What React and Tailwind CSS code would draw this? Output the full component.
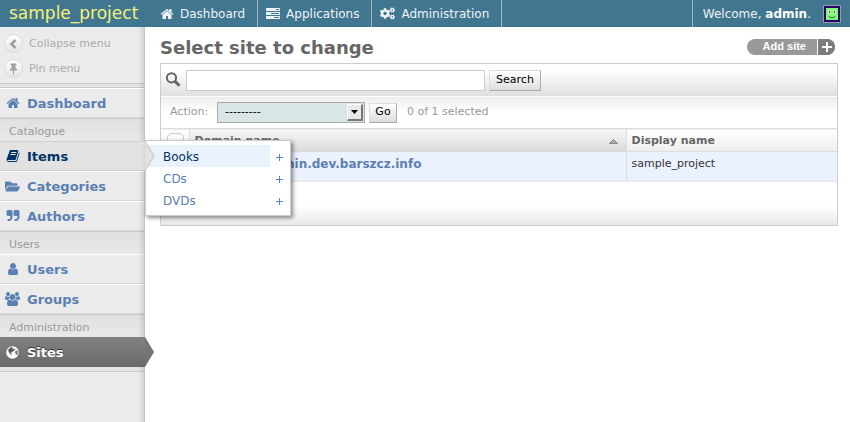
import { FaCogs, FaFolderOpen } from "react-icons/fa";

const PATHS = {
  home: "M1472 992v480q0 26-19 45t-45 19h-384v-384h-256v384h-384q-26 0-45-19t-19-45v-480q0-1 .5-3t.5-3l575-474 575 474q1 2 1 6zm223-69l-62 74q-8 9-21 11h-3q-13 0-21-7l-692-577-692 577q-12 8-24 7-13-2-21-11l-62-74q-8-10-7-23.5t11-21.5l719-599q32-26 76-26t76 26l244 204v-195q0-14 9-23t23-9h192q14 0 23 9t9 23v408l219 182q10 8 11 21.5t-7 23.5z",
  tasks: "M1024 1408h640v-128h-640v128zm-384-512h1024v-128h-1024v128zm640-512h384v-128h-384v128zm512 832v256q0 26-19 45t-45 19h-1664q-26 0-45-19t-19-45v-256q0-26 19-45t45-19h1664q26 0 45 19t19 45zm0-512v256q0 26-19 45t-45 19h-1664q-26 0-45-19t-19-45v-256q0-26 19-45t45-19h1664q26 0 45 19t19 45zm0-512v256q0 26-19 45t-45 19h-1664q-26 0-45-19t-19-45v-256q0-26 19-45t45-19h1664q26 0 45 19t19 45z",
  book: "M1703 478q40 57 18 129l-275 906q-19 64-76.5 107.5t-122.5 43.5h-923q-77 0-148.5-53.5t-99.5-131.5q-24-67-2-127 0-4 3-27t4-37q1-8-3-21.5t-3-19.5q2-11 8-21t16.5-23.5 16.5-23.5q23-38 45-91.5t30-91.5q3-10 .5-30t-.5-28q3-11 17-28t17-23q21-36 42-92t25-90q1-9-2.5-32t.5-28q4-13 22-30.5t22-22.5q19-26 42.5-84.5t27.5-96.5q1-8-3-25.5t-2-26.5q2-8 9-18t18-23 17-21q8-12 16.5-30.5t15-35 16-36 19.5-32 26.5-23.5 36-11.5 47.5 5.5l-1 3q38-9 51-9h761q74 0 114 56t18 130l-274 906q-36 119-71.5 153.5t-128.5 34.5h-869q-27 0-38 15-11 16-1 43 24 70 144 70h923q29 0 56-15.5t35-41.5l300-987q7-22 5-57 38 15 59 43zm-1064 2q-4 13 2 22.5t20 9.5h608q13 0 25.5-9.5t16.5-22.5l21-64q4-13-2-22.5t-20-9.5h-608q-13 0-25.5 9.5t-16.5 22.5zm-83 256q-4 13 2 22.5t20 9.5h608q13 0 25.5-9.5t16.5-22.5l21-64q4-13-2-22.5t-20-9.5h-608q-13 0-25.5 9.5t-16.5 22.5z",
  quote: "M832 320v704q0 104-40.5 198.5t-109.5 163.5-163.5 109.5-198.5 40.5h-64q-26 0-45-19t-19-45v-128q0-26 19-45t45-19h64q106 0 181-75t75-181v-32q0-40-28-68t-68-28h-224q-80 0-136-56t-56-136v-384q0-80 56-136t136-56h384q80 0 136 56t56 136zm896 0v704q0 104-40.5 198.5t-109.5 163.5-163.5 109.5-198.5 40.5h-64q-26 0-45-19t-19-45v-128q0-26 19-45t45-19h64q106 0 181-75t75-181v-32q0-40-28-68t-68-28h-224q-80 0-136-56t-56-136v-384q0-80 56-136t136-56h384q80 0 136 56t56 136z",
  user: "M1536 1399q0 109-62.5 187t-150.5 78h-854q-88 0-150.5-78t-62.5-187q0-85 8.5-160.5t31.5-152 58.5-131 94-89 134.5-34.5q131 128 313 128t313-128q76 0 134.5 34.5t94 89 58.5 131 31.5 152 8.5 160.5zm-256-887q0 159-112.5 271.5t-271.5 112.5-271.5-112.5-112.5-271.5 112.5-271.5 271.5-112.5 271.5 112.5 112.5 271.5z",
  users: "M529 896q-162 5-265 128h-134q-82 0-138-40.5t-56-118.5q0-353 124-353 6 0 43.5 21t97.5 42.5 119 21.5q67 0 133-23-5 37-5 66 0 139 81 256zm1071 637q0 120-73 189.5t-194 69.5h-874q-121 0-194-69.5t-73-189.5q0-53 3.5-103.5t14-109 26.5-108.5 43-97.5 62-81 85.5-53.5 111.5-20q10 0 43 21.5t73 48 107 48 135 21.5 135-21.5 107-48 73-48 43-21.5q61 0 111.5 20t85.5 53.5 62 81 43 97.5 26.5 108.5 14 109 3.5 103.5zm-1024-1277q0 106-75 181t-181 75-181-75-75-181 75-181 181-75 181 75 75 181zm704 384q0 159-112.5 271.5t-271.5 112.5-271.5-112.5-112.5-271.5 112.5-271.5 271.5-112.5 271.5 112.5 112.5 271.5zm576 225q0 78-56 118.5t-138 40.5h-134q-103-123-265-128 81-117 81-256 0-29-5-66 66 23 133 23 59 0 119-21.5t97.5-42.5 43.5-21q124 0 124 353zm-128-609q0 106-75 181t-181 75-181-75-75-181 75-181 181-75 181 75 75 181z",
};

function Glyph({ name, className = "size-[14px]" }) {
  return (
    <svg viewBox={name === "users" ? "-64 0 1920 1792" : "0 0 1792 1792"} className={className} fill="currentColor" aria-hidden="true">
      <path d={PATHS[name]} />
    </svg>
  );
}

function Globe() {
  return (
    <svg viewBox="0 0 13 13" className="size-[13px]" aria-hidden="true">
      <circle cx="6.5" cy="6.5" r="6.2" fill="#fff" />
      <path d="M4.200 1.600L7 1.200 6.200 2.600 8 3.200 8.800 2.500 9.400 3.600 8 4.800 6.800 5.600 6 6.600 4.800 6.600 5 7.800 6.200 8.600 5.400 9 3.600 7.600 2.600 5.600 2 4z" fill="#5c5c5c" />
      <path d="M9.500 5l2.200-.4.2 2.600-1.300 2-1-.6.3-1.400-1.300-.7z" fill="#777" />
    </svg>
  );
}

function TopLink({ icon, children }) {
  return (
    <a href="#" className="flex items-center gap-[6px] border-r border-[#a9b3b7] pr-[12px] pl-[8px] text-[12px] text-[#eef3f5]">
      {icon}
      {children}
    </a>
  );
}

function SectionLabel({ children }) {
  return (
    <h2 className="h-[23px] border-t border-[#c9c9c9] bg-linear-to-b from-[#e0e0e0] to-[#e9e9e9] pl-[9px] text-[11px] leading-[26px] text-[#999]">
      {children}
    </h2>
  );
}

const rowBase = "flex h-[30px] items-center pt-[2px] text-[13px] font-bold";

function RowIcon({ children }) {
  return <span className="flex w-[27px] justify-center pr-[2px] pb-[2px]">{children}</span>;
}

function MenuLink({ icon, children }) {
  return (
    <a href="#" className={`${rowBase} border-t border-b border-t-white border-b-[#dadada] text-[#5b80b2]`}>
      <RowIcon>{icon}</RowIcon>
      {children}
    </a>
  );
}

function ToolButton({ icon, children }) {
  return (
    <button type="button" className="flex h-[25px] w-full items-center gap-[6px] pl-[4px] text-[11px] text-[#aaa]">
      <span className="flex size-[19px] items-center justify-center rounded-full border border-[#dcdcdc] bg-linear-to-b from-white to-[#e4e4e4] text-[#a0a0a0]">
        {icon}
      </span>
      <span className="pt-[2px]">{children}</span>
    </button>
  );
}

function Flyout() {
  const items = ["Books", "CDs", "DVDs"];
  return (
    <ul className="absolute -top-px left-full z-10 w-[146px] border border-[#ccc] bg-white pt-[4px] pb-[4px] text-[12px] shadow-[2px_2px_4px_rgba(0,0,0,0.45)]">
      {items.map((label, i) => (
        <li key={label} className="flex h-[22px] items-center">
          <a
            href="#"
            className={
              i === 0
                ? "h-[22px] w-[124px] bg-[#e9f2fa] pl-[17px] leading-[24px] text-[#003366]"
                : "h-[22px] w-[124px] pl-[17px] leading-[24px] text-[#5b80b2]"
            }
          >
            {label}
          </a>
          <a href="#" aria-label={`Add ${label}`} className="flex w-[18px] justify-center pt-[2px] text-[#5b80b2]">
            <svg viewBox="0 0 7 7" className="size-[7px]" shapeRendering="crispEdges" aria-hidden="true">
              <path d="M3 0h1v3h3v1H4v3H3V4H0V3h3z" fill="currentColor" />
            </svg>
          </a>
        </li>
      ))}
    </ul>
  );
}

function Sidebar() {
  return (
    <nav className="relative w-[145px] shrink-0 bg-[#ebebeb]">
      <div className="pointer-events-none absolute inset-y-0 right-0 w-[7px] border-r border-[#c4c4c4] bg-linear-to-r from-transparent to-black/10" />
      <div className="h-[56px] pt-[4px]">
        <ToolButton
          icon={
            <svg viewBox="0 0 10 10" className="size-[10px]" fill="none" stroke="currentColor" strokeWidth="2.8" aria-hidden="true">
              <path d="M6.500 1L2.500 5l4 4" />
            </svg>
          }
        >
          Collapse menu
        </ToolButton>
        <ToolButton
          icon={
            <svg viewBox="0 0 9 12" className="h-[12px] w-[9px]" fill="currentColor" aria-hidden="true">
              <path d="M1.500 0.500h6v1.500h-1v3.200q1.800.8 2 2.300H5.200L4.800 12h-.6L3.800 7.500H.5q.2-1.500 2-2.300V2h-1z" />
            </svg>
          }
        >
          Pin menu
        </ToolButton>
      </div>
      <div className="h-[5px] border-t border-b border-[#c9c9c9] bg-[#e4e4e4]" />
      <MenuLink icon={<Glyph name="home" />}>Dashboard</MenuLink>
      <SectionLabel>Catalogue</SectionLabel>
      <div className="relative">
        <a href="#" className={`${rowBase} border-t border-b border-[#d0d0d0] bg-[#e2e2e2] text-[#003366]`}>
          <RowIcon><Glyph name="book" /></RowIcon>
          Items
        </a>
        <Flyout />
        <svg viewBox="0 0 10 30" className="absolute top-0 left-full z-20 h-[30px] w-[10px]" aria-hidden="true">
          <path d="M0 0L9 15L0 30z" fill="#e2e2e2" />
          <path d="M0 0L9 15L0 30" fill="none" stroke="#c4c4c4" />
        </svg>
      </div>
      <MenuLink icon={<FaFolderOpen className="size-[15px]" />}>Categories</MenuLink>
      <MenuLink icon={<Glyph name="quote" />}>Authors</MenuLink>
      <SectionLabel>Users</SectionLabel>
      <MenuLink icon={<Glyph name="user" />}>Users</MenuLink>
      <MenuLink icon={<Glyph name="users" className="h-[14px] w-[15px]" />}>Groups</MenuLink>
      <SectionLabel>Administration</SectionLabel>
      <div className="relative">
        <a href="#" className={`${rowBase} bg-linear-to-b from-[#828282] to-[#696969] text-white text-shadow-[0_-1px_0_#333]`}>
          <RowIcon><Globe /></RowIcon>
          Sites
        </a>
        <svg viewBox="0 0 9 30" className="absolute top-0 left-full z-20 h-[30px] w-[9px]" aria-hidden="true">
          <path d="M0 0L9 15L0 30z" fill="#757575" />
        </svg>
      </div>
      <div className="h-[5px] border-b border-[#c9c9c9] bg-[#e4e4e4]" />
    </nav>
  );
}

const buttonLook =
  "border border-t-[#ddd] border-l-[#ddd] border-r-[#aaa] border-b-[#aaa] bg-linear-to-b from-white to-[#ddd] text-[11px] text-black";

function ChangeList() {
  return (
    <section className="border border-[#ccc] bg-white">
      <form className="flex h-[32px] items-center bg-linear-to-b from-white from-20% to-[#dfdfdf] pl-[4px]" onSubmit={(e) => e.preventDefault()}>
        <label htmlFor="searchbar" className="flex w-[21px] items-center text-[#666]" aria-label="Search">
          <svg viewBox="0 0 16 16" className="size-[16px]" fill="none" stroke="currentColor" aria-hidden="true">
            <circle cx="6.5" cy="5.800" r="4.6" strokeWidth="2" />
            <path d="M9.800 9.100L14.500 13.800" strokeWidth="3" />
          </svg>
        </label>
        <input id="searchbar" type="text" className="h-[21px] w-[299px] border border-[#ccc] bg-white px-[4px] text-[11px]" />
        <button type="submit" className={`${buttonLook} ml-[4px] h-[21px] w-[52px] pt-px`}>Search</button>
      </form>
      <div className="flex h-[32px] items-center border-t border-white bg-linear-to-b from-[#eee] to-white to-50% pl-[9px] text-[11px] text-[#999]">
        <label htmlFor="action" className="w-[47px]">Action:</label>
        <span className="relative">
          <select id="action" className="block h-[21px] w-[148px] appearance-none border border-[#aaa] bg-[#d9e5e6] pl-[7px] text-[11px] text-black">
            <option>---------</option>
          </select>
          <span className="pointer-events-none absolute top-[2px] right-[2px] flex h-[17px] w-[16px] items-center justify-center border-t border-l border-r-2 border-b-2 border-t-white border-l-white border-r-[#777] border-b-[#777] bg-[#e8e8e8]">
            <svg viewBox="0 0 7 4" className="h-[4px] w-[7px]" aria-hidden="true"><path d="M0 0h7L3.500 4z" /></svg>
          </span>
        </span>
        <button type="button" className={`${buttonLook} ml-[4px] h-[20px] w-[28px]`}>Go</button>
        <span className="ml-[10px]">0 of 1 selected</span>
      </div>
      <table className="w-full table-fixed border-collapse text-left text-[11px] text-[#333]">
        <thead>
          <tr className="h-[23px] border-t border-b border-[#ddd] bg-linear-to-b from-white to-[#eee] text-[#666]">
            <th className="w-[28px] border-r border-[#ddd] p-0 align-top">
              <input type="checkbox" aria-label="Select all" className="mt-[4px] ml-[6px] block size-[17px] appearance-none rounded-[5px] border border-[#ccc] bg-linear-to-b from-white to-[#eee]" />
            </th>
            <th className="border-r border-[#ddd] bg-linear-to-b from-[#f8f8f8] to-[#d9d9d9] px-[5px] pt-[2px] pb-0">
              <a href="#" className="flex items-center justify-between pr-[3px]">
                Domain name
                <svg viewBox="0 0 9 5" className="h-[5px] w-[9px]" aria-hidden="true">
                  <path d="M4.500 0.500L8.500 4.500h-8z" fill="#aaa" stroke="#888" />
                </svg>
              </a>
            </th>
            <th className="w-[211px] px-[5px] pt-[2px] pb-0">Display name</th>
          </tr>
        </thead>
        <tbody>
          <tr className="h-[29px] border-b-2 border-[#eaeaea] bg-[#ebf1ff] align-top">
            <td className="border-r border-[#ebf1ff] p-0">
              <input type="checkbox" aria-label="Select django-wpadmin.dev.barszcz.info" className="mt-[5px] ml-[6px] block size-[17px] appearance-none rounded-[5px] border border-[#ccc] bg-white" />
            </td>
            <td className="border-r border-[#ddd] px-[5px] pt-[4px] pb-0 leading-[16px]">
              <a href="#" className="text-[12px] font-bold text-[#5b80b2]">django-wpadmin.dev.barszcz.info</a>
            </td>
            <td className="px-[5px] pt-[4px] pb-0 leading-[16px]">sample_project</td>
          </tr>
        </tbody>
      </table>
      <div className="h-[43px] bg-linear-to-b from-white from-55% to-[#e8e8e8]" />
    </section>
  );
}

export default function App() {
  return (
    <div className="flex min-h-screen flex-col bg-white font-['DejaVu_Sans',sans-serif]">
      <header className="flex h-[27px] bg-[#417690]">
        <a href="#" className="w-[152px] pl-[9px] text-[17px] leading-[26px] text-[#f4f379]">sample_project</a>
        <TopLink icon={<Glyph name="home" />}>Dashboard</TopLink>
        <TopLink icon={<Glyph name="tasks" />}>Applications</TopLink>
        <TopLink icon={<FaCogs className="size-[15px]" />}>Administration</TopLink>
        <div className="ml-auto flex items-center border-l border-[#a9b3b7] pr-[9px] pl-[10px] text-[12px] text-[#eef3f5]">
          <span>Welcome, <strong className="text-white">admin</strong>.</span>
          <svg viewBox="0 0 18 18" className="ml-[12px] size-[18px]" shapeRendering="crispEdges" role="img" aria-label="Avatar">
            <path d="M0 0h18v18H0z" fill="#999" />
            <path d="M1 1h16v16H1z" fill="#1c0a63" />
            <path d="M3 3h12v12H3z" fill="#82f67d" />
            <path d="M5 5h3v4H5zM10 5h3v4h-3z" fill="#c5f5b5" />
            <path d="M6 6h1v2H6zM11 6h1v2h-1zM6 11h1v1H6zM7 12h4v1H7zM11 11h1v1h-1z" fill="#39713a" />
          </svg>
        </div>
      </header>
      <div className="flex flex-1">
        <Sidebar />
        <main className="min-w-0 flex-1 pr-[12px] pl-[15px]">
          <div className="flex h-[36px] items-center justify-between pt-[4px]">
            <h1 className="text-[18px] font-bold text-[#666]">Select site to change</h1>
            <a href="#" className="mr-[3px] flex h-[16px] overflow-hidden rounded-full bg-[#999] font-['Liberation_Sans',Arial,sans-serif] text-[11px] leading-[15px] font-bold text-white">
              <span className="border-r border-white pr-[11px] pl-[16px]">Add site</span>
              <span className="flex w-[17px] items-center justify-center bg-[#7d7d7d]">
                <svg viewBox="0 0 10 10" className="size-[10px]" shapeRendering="crispEdges" aria-hidden="true">
                  <path d="M4 0h2v4h4v2H6v4H4V6H0V4h4z" fill="#fff" />
                </svg>
              </span>
            </a>
          </div>
          <ChangeList />
        </main>
      </div>
    </div>
  );
}
